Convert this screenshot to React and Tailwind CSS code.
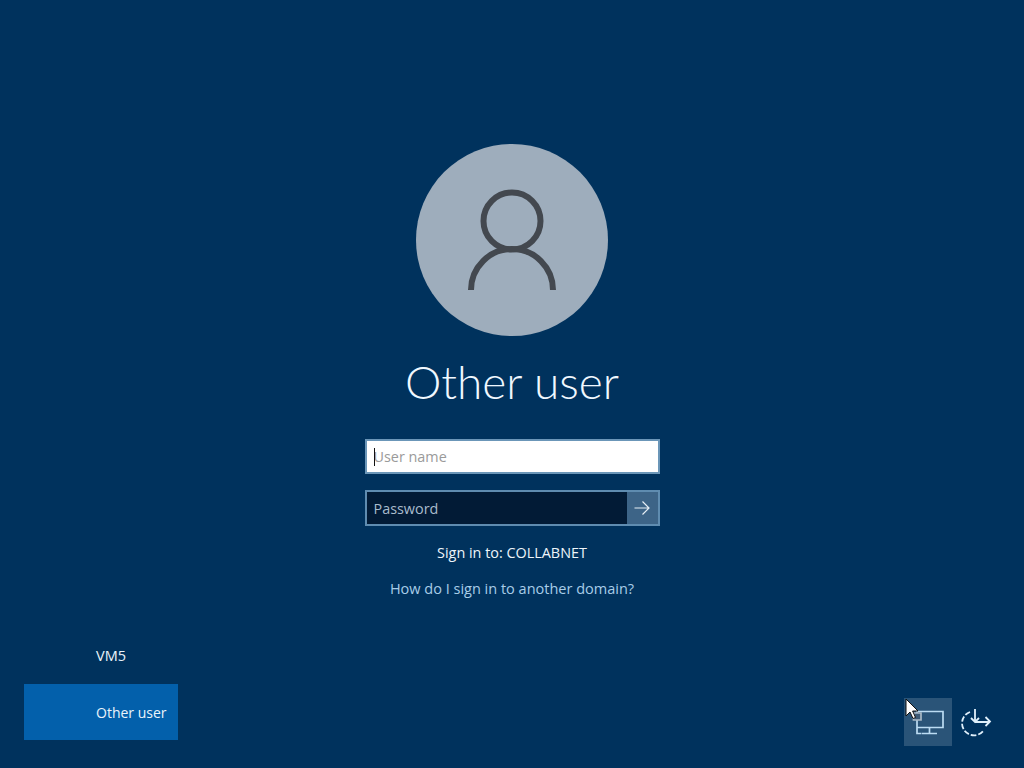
export default function App() {
  return (
    <div className="relative flex h-[768px] w-[1024px] flex-col overflow-hidden bg-[#00325d] font-['Open_Sans','Noto_Sans',sans-serif] text-white">
      <main className="flex flex-col items-center pt-[144px]">
        <div className="flex h-[192px] w-[192px] items-center justify-center rounded-full bg-[#9eadbc]">
          <svg width="192" height="192" viewBox="0 0 192 192" fill="none" stroke="#43484f" strokeWidth="6">
            <circle cx="96" cy="77" r="28.5" />
            <path d="M55 146 a41 41 0 0 1 82 0" />
          </svg>
        </div>
        <h1 className="mt-[14px] h-[64px] font-['Lato','Open_Sans',sans-serif] text-[46px] leading-[64px] font-light text-[#f0f8ff]">Other user</h1>
        <div className="relative mt-[25px]">
          <input
            readOnly
            placeholder="User name"
            className="h-[35px] w-[295px] border-2 border-[#6b96b8] bg-white px-[7px] text-[14.4px] text-black outline-none placeholder:text-[#9a9a9a]"
          />
          <span className="absolute top-[9px] left-[9px] h-[18px] w-px bg-[#111]" />
        </div>
        <div className="mt-[16px] flex h-[36px] w-[295px] border-2 border-[#5f8cb0] bg-[#021b36]">
          <input
            readOnly
            placeholder="Password"
            className="h-full min-w-0 flex-1 bg-transparent px-[7px] text-[14.4px] outline-none placeholder:text-[#a9bccd]"
          />
          <button className="flex w-[31px] items-center justify-center bg-[#3d6487]">
            <svg width="18" height="16" viewBox="0 0 18 16" fill="none" stroke="#e6eef5" strokeWidth="1.2">
              <path d="M1.5 8H16M9.5 1.5 16 8l-6.5 6.5" />
            </svg>
          </button>
        </div>
        <p className="mt-[16px] text-[14.4px] leading-[22px] text-[#eef5fa]">Sign in to: COLLABNET</p>
        <p className="mt-[14px] text-[14.5px] leading-[22px] text-[#a8cde8]">How do I sign in to another domain?</p>
      </main>

      <footer className="mt-auto flex items-end justify-between pb-[22px] pl-[24px] pr-[24px]">
        <nav className="mb-[6px] flex w-[154px] flex-col text-[14px] text-[#eaf4fb]">
          <div className="flex h-[56px] items-center pl-[72px] text-[14.5px]">VM5</div>
          <div className="flex h-[56px] items-center bg-[#0360ab] pl-[72px]">Other user</div>
        </nav>
        <div className="flex items-center">
          <button className="flex h-[48px] w-[48px] items-center justify-center bg-[#2a5478]">
            <svg width="48" height="48" viewBox="0 0 48 48" fill="none" stroke="#bcdcf3" strokeWidth="1.7">
              <path d="M13 13.5h26v16H13zM25.5 29.5v6M18 35.5h15M13 29.5v6h4.5" />
              <path d="M9.5 15h7.5v7H9.5z" fill="#3c5a76" stroke="#a9b9c6" />
            </svg>
          </button>
          <button className="flex h-[48px] w-[48px] items-center justify-center">
            <svg width="48" height="48" viewBox="0 0 48 48" fill="none" stroke="#e0f0fb" strokeWidth="1.8">
              <path d="M18 14a12 12 0 1 0 14 18" strokeDasharray="5.5 2" />
              <path d="M23 11v13M19 20l4 4 4-4M23 24h15M33.5 19l4.5 4.5-4.5 4.5" />
            </svg>
          </button>
        </div>
      </footer>

      <svg className="absolute top-[698px] left-[905px]" width="14" height="22" viewBox="0 0 14 22">
        <path d="M1 1v17l4-4 3 6.5 2.5-1L7.6 13H13z" fill="#fff" stroke="#111" strokeWidth="1" />
      </svg>
    </div>
  );
}
